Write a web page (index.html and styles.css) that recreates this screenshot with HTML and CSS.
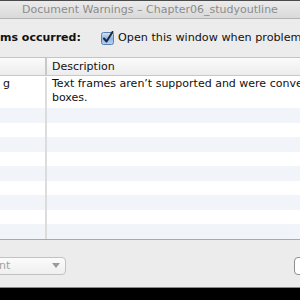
FILE: index.html
```html
<!DOCTYPE html>
<html lang="en">
  <head>
    <meta charset="UTF-8" />
    <title>Document Warnings</title>
    <link rel="stylesheet" href="styles.css">
  </head>
  <body>
    <div class="window">
      <!-- Title bar -->
      <div class="titlebar">Document Warnings – Chapter06_studyoutline</div>

      <!-- Toolbar -->
      <div class="toolbar">
        <span class="label">ms occurred:</span>
        <label class="check">
          <svg class="box" width="14" height="14" viewBox="0 0 14 14">
            <defs>
              <linearGradient id="cb" x1="0" y1="0" x2="0" y2="1">
                <stop offset="0" stop-color="#d6e6f8" />
                <stop offset="0.5" stop-color="#8fb6e6" />
                <stop offset="1" stop-color="#b9d4f3" />
              </linearGradient>
            </defs>
            <rect x="0.5" y="1.5" width="12" height="12" rx="2" fill="url(#cb)" stroke="#5a7fb0" />
            <path d="M3 7.5 L5.5 10.5 L11.5 1" fill="none" stroke="#1c2a3c" stroke-width="2" stroke-linecap="round" stroke-linejoin="round" />
          </svg>
          <span class="check-text">Open this window when problem</span>
        </label>
      </div>

      <!-- Warnings table -->
      <div class="table">
        <div class="row head">
          <div class="cell first"></div>
          <div class="cell">Description</div>
        </div>
        <div class="row tall">
          <div class="cell first"><span class="kind">g</span></div>
          <div class="cell">Text frames aren’t supported and were conve<br>boxes.</div>
        </div>
        <div class="row alt"><div class="cell first"></div><div class="cell"></div></div>
        <div class="row"><div class="cell first"></div><div class="cell"></div></div>
        <div class="row alt"><div class="cell first"></div><div class="cell"></div></div>
        <div class="row"><div class="cell first"></div><div class="cell"></div></div>
        <div class="row alt"><div class="cell first"></div><div class="cell"></div></div>
        <div class="row"><div class="cell first"></div><div class="cell"></div></div>
        <div class="row alt"><div class="cell first"></div><div class="cell"></div></div>
        <div class="row"><div class="cell first"></div><div class="cell"></div></div>
        <div class="row alt"><div class="cell first"></div><div class="cell"></div></div>
      </div>

      <!-- Bottom bar -->
      <div class="footer">
        <div class="popup">
          <span>nt</span>
          <span class="arrow"></span>
        </div>
        <div class="button"></div>
      </div>
    </div>
  </body>
</html>
```

FILE: styles.css
```css
/* Document warnings window */

body {
  margin: 0;
  background-color: #000;
  font-family: "DejaVu Sans", "Liberation Sans", sans-serif;
  overflow: hidden;
}

.window {
  width: 300px;
  height: 287px;
  background-color: #ececec;
  border-top: 1px solid #4a4a4a;
  display: flex;
  flex-direction: column;
  overflow: hidden;
}

/* Title bar */
.titlebar {
  height: 17px;
  flex-shrink: 0;
  line-height: 17px;
  text-align: center;
  white-space: nowrap;
  font-size: 11px;
  color: #8c8c8c;
  background: linear-gradient(#ebebeb, #d9d9d9);
  border-bottom: 1px solid #b4b4b4;
}

/* Toolbar with checkbox */
.toolbar {
  height: 38px;
  flex-shrink: 0;
  display: flex;
  align-items: center;
  white-space: nowrap;
  font-size: 11px;
  color: #111;
  padding-bottom: 1px;
  box-sizing: border-box;
  overflow: hidden;
}

.label {
  font-weight: bold;
  width: 101px;
  flex-shrink: 0;
}

.check {
  display: flex;
  align-items: center;
  gap: 3px;
  min-width: 0;
}

.box {
  flex-shrink: 0;
}

.check-text {
  font-size: 11.2px;
}

/* Table */
.table {
  flex-shrink: 0;
  background-color: #fff;
  border-top: 1px solid #c4c4c4;
  border-bottom: 1px solid #a8a8a8;
}

.row {
  display: grid;
  grid-template-columns: 47px 1fr;
  height: 14px;
  font-size: 11px;
  color: #111;
}

.row:nth-child(odd) {
  height: 15px;
}

.row.alt {
  background-color: #f1f5fa;
}

.row.head {
  height: 17px;
  line-height: 17px;
  background: linear-gradient(#fbfbfb, #ececec);
  border-bottom: 1px solid #c8c8c8;
}

.row.tall {
  height: 32px;
  line-height: 14px;
  padding-top: 1px;
  box-sizing: border-box;
}

.cell {
  padding-left: 5px;
  white-space: nowrap;
  overflow: hidden;
  min-width: 0;
  text-align: left;
}

.cell.first {
  padding-left: 0;
  border-right: 2px solid #dcdcdc;
}

.kind {
  display: block;
  margin-left: 3px;
}

.row.head .cell.first {
  border-right-color: #c8c8c8;
}

/* Bottom bar */
.footer {
  flex: 1;
  display: flex;
  align-items: center;
  justify-content: space-between;
  padding-top: 4px;
  border-bottom: 1px solid #8a8a8a;
}

.popup {
  width: 70px;
  height: 18px;
  margin-left: -4px;
  box-sizing: border-box;
  border: 1px solid #c2c2c2;
  border-radius: 4px;
  background: linear-gradient(#fbfbfb, #efefef);
  display: flex;
  align-items: center;
  justify-content: space-between;
  padding: 0 5px 0 2px;
  font-size: 11px;
  color: #a0a0a0;
}

.arrow {
  width: 0;
  height: 0;
  border-left: 4px solid transparent;
  border-right: 4px solid transparent;
  border-top: 5px solid #9a9a9a;
}

.button {
  width: 14px;
  height: 18px;
  margin-right: -8px;
  box-sizing: border-box;
  border: 1px solid #8e8e8e;
  border-radius: 4px;
  background-color: #fff;
}
```
